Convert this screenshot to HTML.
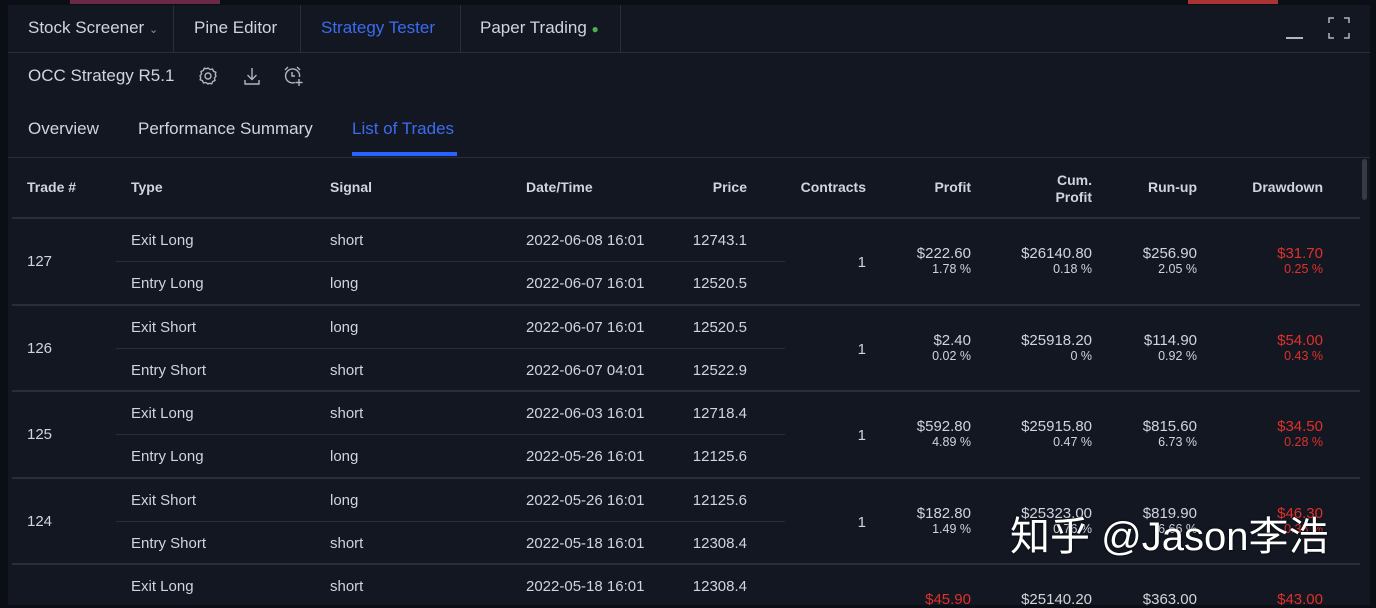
<!DOCTYPE html>
<html><head><meta charset="utf-8"><style>
*{margin:0;padding:0;box-sizing:border-box}
body{width:1376px;height:598px;background:#0c0e15;overflow:hidden;position:relative;font-family:"Liberation Sans Narrow","Liberation Sans",sans-serif;color:#d1d4dc;font-size:15px}
.p{position:absolute;left:8px;top:5px;width:1362px;height:600px;background:#131722}
.t{position:absolute;white-space:nowrap;line-height:1}
.r{text-align:right}
.l{position:absolute;height:1px;background:#2a2e39}
.b{font-weight:bold;font-size:14px}
.red{color:#e0302a}
.s{font-size:12.5px}
</style></head><body>
<div style="position:absolute;left:70px;top:0;width:150px;height:4px;background:#6a2a45"></div>
<div style="position:absolute;left:1188px;top:0;width:90px;height:4px;background:#a33"></div>
<div class="p"></div>
<div class="l" style="left:8px;top:52px;width:1362px"></div>
<div class="l" style="left:173px;top:5px;width:1px;height:47px"></div>
<div class="l" style="left:300px;top:5px;width:1px;height:47px"></div>
<div class="l" style="left:460px;top:5px;width:1px;height:47px"></div>
<div class="l" style="left:620px;top:5px;width:1px;height:47px"></div>
<div class="t" style="left:28px;top:19px;font-size:17px">Stock Screener <span style="font-size:11px;color:#999">&#8964;</span></div>
<div class="t" style="left:194px;top:19px;font-size:17px">Pine Editor</div>
<div class="t" style="left:321px;top:19px;font-size:17px;color:#3b6cf0">Strategy Tester</div>
<div class="t" style="left:480px;top:19px;font-size:17px">Paper Trading <span style="color:#4caf50;font-size:12px">●</span></div>
<div style="position:absolute;left:1286px;top:37px;width:17px;height:1.5px;background:#b2b5be"></div>
<svg style="position:absolute;left:1328px;top:17px" width="22" height="22" fill="none" stroke="#b2b5be" stroke-width="1.5"><path d="M1 6V1h5M16 1h5v5M21 16v5h-5M6 21H1v-5"/></svg>
<div class="t" style="left:28px;top:67px;font-size:17px">OCC Strategy R5.1</div>
<svg style="position:absolute;left:198px;top:66px" width="20" height="20" fill="none" stroke="#b2b5be" stroke-width="1.4"><circle cx="10" cy="10" r="3"/><path d="M10 2l2 1.5 2.5-.5 1 2.3 2.3 1-.5 2.5L18 10l-1.5 2 .5 2.5-2.3 1-1 2.3-2.5-.5L10 18l-2-1.5-2.5.5-1-2.3-2.3-1 .5-2.5L2 10l1.5-2L3 5.5l2.3-1 1-2.3 2.5.5z"/></svg>
<svg style="position:absolute;left:242px;top:66px" width="20" height="20" fill="none" stroke="#b2b5be" stroke-width="1.4"><path d="M10 2v11M5.5 9l4.5 4.5L14.5 9M3 14v4h14v-4"/></svg>
<svg style="position:absolute;left:282px;top:65px" width="22" height="22" fill="none" stroke="#b2b5be" stroke-width="1.4"><path d="M13 17.5A7 7 0 1 1 17.5 12M10 7v4h3M3 5l3-3M15 2l3 3M17 14v7M13.5 17.5h7"/></svg>
<div class="t" style="left:28px;top:120px;font-size:17px">Overview</div>
<div class="t" style="left:138px;top:120px;font-size:17px">Performance Summary</div>
<div class="t" style="left:352px;top:120px;font-size:17px;color:#3b6cf0">List of Trades</div>
<div style="position:absolute;left:352px;top:152px;width:105px;height:4px;background:#2962ff"></div>
<div class="l" style="left:8px;top:157px;width:1362px"></div>
<div style="position:absolute;left:1362px;top:159px;width:5px;height:41px;background:#363a45;border-radius:3px"></div>
<div class="t b" style="left:27px;top:180px">Trade #</div>
<div class="t b" style="left:131px;top:180px">Type</div>
<div class="t b" style="left:330px;top:180px">Signal</div>
<div class="t b" style="left:526px;top:180px">Date/Time</div>
<div class="t b r" style="left:647px;width:100px;top:180px">Price</div>
<div class="t b r" style="left:766px;width:100px;top:180px">Contracts</div>
<div class="t b r" style="left:871px;width:100px;top:180px">Profit</div>
<div class="t b r" style="left:992px;width:100px;top:172px;line-height:17px">Cum.<br>Profit</div>
<div class="t b r" style="left:1097px;width:100px;top:180px">Run-up</div>
<div class="t b r" style="left:1223px;width:100px;top:180px">Drawdown</div>
<div class="l" style="left:12px;top:217px;width:1348px;height:2px"></div>

<!-- rows -->
<div id="rows"></div>
<div style="position:absolute;left:0;top:218px">
<!-- 127 -->
<div class="t" style="left:27px;top:36px">127</div>
<div class="t" style="left:131px;top:15px">Exit Long</div><div class="t" style="left:330px;top:15px">short</div><div class="t" style="left:526px;top:15px">2022-06-08 16:01</div><div class="t r" style="left:647px;width:100px;top:15px">12743.1</div>
<div class="l" style="left:116px;top:43px;width:669px"></div>
<div class="t" style="left:131px;top:58px">Entry Long</div><div class="t" style="left:330px;top:58px">long</div><div class="t" style="left:526px;top:58px">2022-06-07 16:01</div><div class="t r" style="left:647px;width:100px;top:58px">12520.5</div>
<div class="t r" style="left:766px;width:100px;top:37px">1</div>
<div class="t r" style="left:871px;width:100px;top:28px">$222.60</div><div class="t r s" style="left:871px;width:100px;top:45px">1.78 %</div>
<div class="t r" style="left:992px;width:100px;top:28px">$26140.80</div><div class="t r s" style="left:992px;width:100px;top:45px">0.18 %</div>
<div class="t r" style="left:1097px;width:100px;top:28px">$256.90</div><div class="t r s" style="left:1097px;width:100px;top:45px">2.05 %</div>
<div class="t r red" style="left:1223px;width:100px;top:28px">$31.70</div><div class="t r s red" style="left:1223px;width:100px;top:45px">0.25 %</div>
<div class="l" style="left:12px;top:86px;width:1348px;height:2px"></div>
</div>
<div style="position:absolute;left:0;top:305px">
<div class="t" style="left:27px;top:36px">126</div>
<div class="t" style="left:131px;top:15px">Exit Short</div><div class="t" style="left:330px;top:15px">long</div><div class="t" style="left:526px;top:15px">2022-06-07 16:01</div><div class="t r" style="left:647px;width:100px;top:15px">12520.5</div>
<div class="l" style="left:116px;top:43px;width:669px"></div>
<div class="t" style="left:131px;top:58px">Entry Short</div><div class="t" style="left:330px;top:58px">short</div><div class="t" style="left:526px;top:58px">2022-06-07 04:01</div><div class="t r" style="left:647px;width:100px;top:58px">12522.9</div>
<div class="t r" style="left:766px;width:100px;top:37px">1</div>
<div class="t r" style="left:871px;width:100px;top:28px">$2.40</div><div class="t r s" style="left:871px;width:100px;top:45px">0.02 %</div>
<div class="t r" style="left:992px;width:100px;top:28px">$25918.20</div><div class="t r s" style="left:992px;width:100px;top:45px">0 %</div>
<div class="t r" style="left:1097px;width:100px;top:28px">$114.90</div><div class="t r s" style="left:1097px;width:100px;top:45px">0.92 %</div>
<div class="t r red" style="left:1223px;width:100px;top:28px">$54.00</div><div class="t r s red" style="left:1223px;width:100px;top:45px">0.43 %</div>
<div class="l" style="left:12px;top:85px;width:1348px;height:2px"></div>
</div>
<div style="position:absolute;left:0;top:391px">
<div class="t" style="left:27px;top:36px">125</div>
<div class="t" style="left:131px;top:15px">Exit Long</div><div class="t" style="left:330px;top:15px">short</div><div class="t" style="left:526px;top:15px">2022-06-03 16:01</div><div class="t r" style="left:647px;width:100px;top:15px">12718.4</div>
<div class="l" style="left:116px;top:43px;width:669px"></div>
<div class="t" style="left:131px;top:58px">Entry Long</div><div class="t" style="left:330px;top:58px">long</div><div class="t" style="left:526px;top:58px">2022-05-26 16:01</div><div class="t r" style="left:647px;width:100px;top:58px">12125.6</div>
<div class="t r" style="left:766px;width:100px;top:37px">1</div>
<div class="t r" style="left:871px;width:100px;top:28px">$592.80</div><div class="t r s" style="left:871px;width:100px;top:45px">4.89 %</div>
<div class="t r" style="left:992px;width:100px;top:28px">$25915.80</div><div class="t r s" style="left:992px;width:100px;top:45px">0.47 %</div>
<div class="t r" style="left:1097px;width:100px;top:28px">$815.60</div><div class="t r s" style="left:1097px;width:100px;top:45px">6.73 %</div>
<div class="t r red" style="left:1223px;width:100px;top:28px">$34.50</div><div class="t r s red" style="left:1223px;width:100px;top:45px">0.28 %</div>
<div class="l" style="left:12px;top:86px;width:1348px;height:2px"></div>
</div>
<div style="position:absolute;left:0;top:478px">
<div class="t" style="left:27px;top:36px">124</div>
<div class="t" style="left:131px;top:15px">Exit Short</div><div class="t" style="left:330px;top:15px">long</div><div class="t" style="left:526px;top:15px">2022-05-26 16:01</div><div class="t r" style="left:647px;width:100px;top:15px">12125.6</div>
<div class="l" style="left:116px;top:43px;width:669px"></div>
<div class="t" style="left:131px;top:58px">Entry Short</div><div class="t" style="left:330px;top:58px">short</div><div class="t" style="left:526px;top:58px">2022-05-18 16:01</div><div class="t r" style="left:647px;width:100px;top:58px">12308.4</div>
<div class="t r" style="left:766px;width:100px;top:37px">1</div>
<div class="t r" style="left:871px;width:100px;top:28px">$182.80</div><div class="t r s" style="left:871px;width:100px;top:45px">1.49 %</div>
<div class="t r" style="left:992px;width:100px;top:28px">$25323.00</div><div class="t r s" style="left:992px;width:100px;top:45px">0.76 %</div>
<div class="t r" style="left:1097px;width:100px;top:28px">$819.90</div><div class="t r s" style="left:1097px;width:100px;top:45px">6.66 %</div>
<div class="t r red" style="left:1223px;width:100px;top:28px">$46.30</div><div class="t r s red" style="left:1223px;width:100px;top:45px">0.38 %</div>
<div class="l" style="left:12px;top:85px;width:1348px;height:2px"></div>
</div>
<div style="position:absolute;left:0;top:564px">
<div class="t" style="left:131px;top:15px">Exit Long</div><div class="t" style="left:330px;top:15px">short</div><div class="t" style="left:526px;top:15px">2022-05-18 16:01</div><div class="t r" style="left:647px;width:100px;top:15px">12308.4</div>
<div class="t r red" style="left:871px;width:100px;top:28px">$45.90</div>
<div class="t r" style="left:992px;width:100px;top:28px">$25140.20</div>
<div class="t r" style="left:1097px;width:100px;top:28px">$363.00</div>
<div class="t r red" style="left:1223px;width:100px;top:28px">$43.00</div>
</div>
<div class="t" style="left:1010px;top:517px;font-size:40px;color:#fff;font-family:'Liberation Sans','Noto Sans CJK SC',sans-serif;text-shadow:0 0 2px #000">知乎 @Jason李浩</div>
</body></html>
